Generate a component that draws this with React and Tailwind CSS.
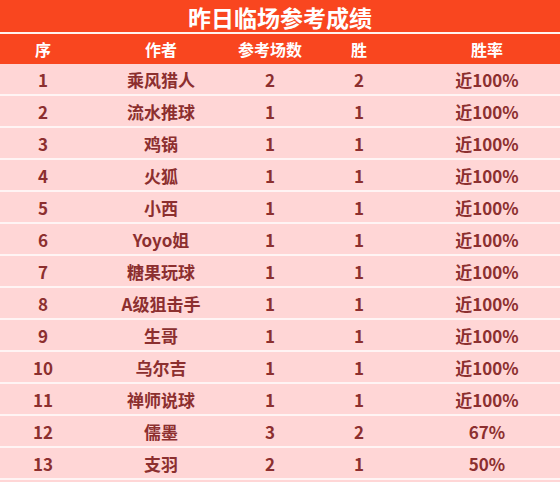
import React from "react";

const rows = [
  ["1", "乘风猎人", "2", "2", "近100%"],
  ["2", "流水推球", "1", "1", "近100%"],
  ["3", "鸡锅", "1", "1", "近100%"],
  ["4", "火狐", "1", "1", "近100%"],
  ["5", "小西", "1", "1", "近100%"],
  ["6", "Yoyo姐", "1", "1", "近100%"],
  ["7", "糖果玩球", "1", "1", "近100%"],
  ["8", "A级狙击手", "1", "1", "近100%"],
  ["9", "生哥", "1", "1", "近100%"],
  ["10", "乌尔吉", "1", "1", "近100%"],
  ["11", "禅师说球", "1", "1", "近100%"],
  ["12", "儒墨", "3", "2", "67%"],
  ["13", "支羽", "2", "1", "50%"],
];

const cols = "grid grid-cols-[86px_150px_68px_110px_146px]";

const App = () => {
  return (
    <div
      className="w-[560px] h-[482px] overflow-hidden bg-[#ffd6d6]"
      style={{ fontFamily: '"Noto Sans CJK SC", "Noto Sans", sans-serif' }}
    >
      <div className="h-[34px] bg-[#f9461f] flex items-center justify-center border-b-2 border-[#fff3ee]">
        <h1 className="text-[23px] font-bold text-white leading-none pt-[2px]">昨日临场参考成绩</h1>
      </div>
      <div className={`${cols} h-[30px] bg-[#f9461f] items-center text-white text-[16px] font-bold`}>
        <span className="text-center">序</span>
        <span className="text-center">作者</span>
        <span className="text-center">参考场数</span>
        <span className="text-center">胜</span>
        <span className="text-center">胜率</span>
      </div>
      {rows.map((r) => (
        <div
          key={r[0]}
          className={`${cols} h-[32px] items-center border-b-2 border-[#fff4f4] text-[#8c2f2f] text-[17px] font-bold`}
        >
          {r.map((c, i) => (
            <span key={i} className="text-center leading-none">
              {c}
            </span>
          ))}
        </div>
      ))}
    </div>
  );
};

export default App;
